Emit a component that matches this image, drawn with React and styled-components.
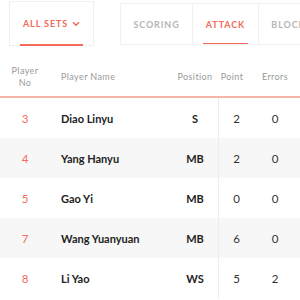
import React from "react";
import styled, { createGlobalStyle } from "styled-components";

const GlobalStyle = createGlobalStyle`
  body {
    margin: 0;
    background: #fff;
    font-family: "Lato", "Liberation Sans", sans-serif;
  }
`;

const Page = styled.div`
  width: 300px;
  height: 300px;
  overflow: hidden;
`;

const TabBar = styled.div`
  display: flex;
  align-items: flex-start;
  padding: 1px 0 0 9px;
  height: 57px;
  box-sizing: border-box;
`;

const SetSelect = styled.div`
  position: relative;
  flex: 0 0 85px;
  height: 45px;
  box-sizing: border-box;
  border: 1px solid #f0f0f0;
  display: flex;
  align-items: center;
  justify-content: center;
  gap: 4px;
  color: #f26b5b;
  font-size: 9px;
  font-weight: 700;
  letter-spacing: 0.9px;
`;

const Underline = styled.span`
  position: absolute;
  left: ${(p) => p.left}px;
  right: ${(p) => p.right}px;
  bottom: -1px;
  height: 2px;
  background: #f26b5b;
`;

const Tabs = styled.div`
  display: flex;
  flex-shrink: 0;
  margin: 2px 0 0 26px;
  height: 42px;
  border: 1px solid #f0f0f0;
  border-right: none;
  box-sizing: border-box;
`;

const Tab = styled.div`
  position: relative;
  flex: 0 0 ${(p) => p.w}px;
  display: flex;
  align-items: center;
  justify-content: center;
  border-right: 1px solid #f0f0f0;
  box-sizing: border-box;
  font-size: 9px;
  font-weight: 700;
  letter-spacing: 0.9px;
  color: ${(p) => (p.active ? "#f26b5b" : "#b5b5b5")};
  white-space: nowrap;
  overflow: hidden;
`;

const cols = "50px 122px 46px 36px 42px";

const HeadRow = styled.div`
  display: grid;
  grid-template-columns: ${cols};
  height: 39px;
  align-items: center;
  border-bottom: 2px solid #f7b4a9;
  color: #9a9a9a;
  font-size: 9px;
  letter-spacing: 0.4px;
  line-height: 12px;
`;

const HeadCell = styled.div`
  text-align: ${(p) => p.align || "center"};
  padding-left: ${(p) => p.pl || 0}px;
  padding-right: ${(p) => p.pr || 0}px;
`;

const Row = styled.div`
  display: grid;
  grid-template-columns: ${cols};
  height: 40px;
  align-items: center;
  background: ${(p) => (p.shade ? "#f7f7f7" : "#fff")};
  font-size: 11.5px;
`;

const Num = styled.div`
  text-align: center;
  color: #f26b5b;
`;

const Name = styled.div`
  padding-left: 11px;
  font-size: 11px;
  font-weight: 700;
  color: #222;
`;

const Pos = styled.div`
  font-size: 11px;
  font-weight: 700;
  color: #222;
  height: 100%;
  display: flex;
  align-items: center;
  justify-content: center;
`;

const Stat = styled.div`
  color: #333;
  height: 100%;
  display: flex;
  align-items: center;
  justify-content: center;
  border-left: ${(p) => (p.divider ? "1px solid #ececec" : "none")};
`;

const players = [
  { no: 3, name: "Diao Linyu", pos: "S", point: 2, errors: 0 },
  { no: 4, name: "Yang Hanyu", pos: "MB", point: 2, errors: 0 },
  { no: 5, name: "Gao Yi", pos: "MB", point: 0, errors: 0 },
  { no: 7, name: "Wang Yuanyuan", pos: "MB", point: 6, errors: 0 },
  { no: 8, name: "Li Yao", pos: "WS", point: 5, errors: 2 },
];

const Chevron = () => (
  <svg width="8" height="6" viewBox="0 0 8 6" fill="none">
    <path d="M1 1.2L4 4.2L7 1.2" stroke="#f26b5b" strokeWidth="1.5" />
  </svg>
);

const App = () => {
  return (
    <Page>
      <GlobalStyle />
      <TabBar>
        <SetSelect>
          ALL SETS <Chevron />
          <Underline left={10} right={10} />
        </SetSelect>
        <Tabs>
          <Tab w={72}>SCORING</Tab>
          <Tab w={66} active>
            ATTACK
            <Underline left={10} right={10} />
          </Tab>
          <Tab w={60}>BLOCK</Tab>
        </Tabs>
      </TabBar>
      <HeadRow>
        <HeadCell>
          Player
          <br />
          No
        </HeadCell>
        <HeadCell align="left" pl={11}>
          Player Name
        </HeadCell>
        <HeadCell>Position</HeadCell>
        <HeadCell pr={8}>Point</HeadCell>
        <HeadCell>Errors</HeadCell>
      </HeadRow>
      {players.map((p, i) => (
        <Row key={p.no} shade={i % 2 === 1}>
          <Num>{p.no}</Num>
          <Name>{p.name}</Name>
          <Pos>{p.pos}</Pos>
          <Stat divider>{p.point}</Stat>
          <Stat>{p.errors}</Stat>
        </Row>
      ))}
    </Page>
  );
};

export default App;
